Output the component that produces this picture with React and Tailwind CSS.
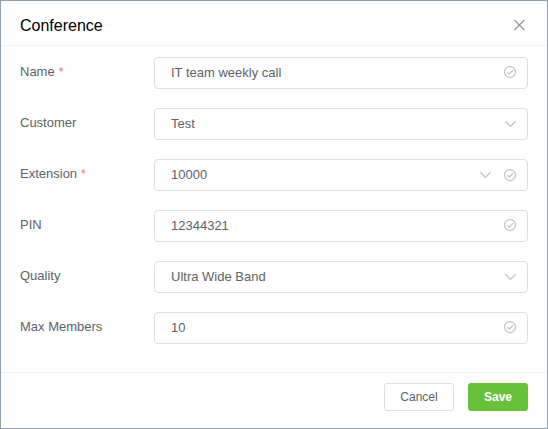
function CheckCircle() {
  return (
    <svg viewBox="0 0 14 14" className="h-3.5 w-3.5" fill="none" stroke="#c0c4cc" strokeWidth="1.25">
      <circle cx="7" cy="7" r="5.5" />
      <path d="M4.2 7.1 6.3 9.1 10 5.1" />
    </svg>
  );
}

function Chevron() {
  return (
    <svg viewBox="0 0 14 14" className="h-3.5 w-3.5" fill="none" stroke="#c0c4cc" strokeWidth="1.25">
      <path d="M2.4 4.3 7.5 9.4 12.6 4.3" />
    </svg>
  );
}

const fields = [
  { label: "Name", required: true, value: "IT team weekly call", valid: true },
  { label: "Customer", value: "Test", select: true },
  { label: "Extension", required: true, value: "10000", select: true, valid: true },
  { label: "PIN", value: "12344321", valid: true },
  { label: "Quality", value: "Ultra Wide Band", select: true },
  { label: "Max Members", value: "10", valid: true },
];

function Field({ label, required, value, select, valid }) {
  return (
    <div className="flex h-8">
      <div className="w-[134px] shrink-0 text-[13px] leading-[30px]">
        {label}
        {required && <span className="ml-1 text-xs text-[#f56c6c]">*</span>}
      </div>
      <div className="flex flex-1 items-center justify-between rounded border border-[#dcdfe6] pr-[10px] pl-4">
        <span className="text-[13px] leading-[30px]">{value}</span>
        <span className={select ? "flex items-center gap-[11px]" : "flex items-center pb-0.5"}>
          {select && <Chevron />}
          {valid && <CheckCircle />}
        </span>
      </div>
    </div>
  );
}

export default function App() {
  return (
    <div className="flex h-[429px] w-[548px] flex-col border border-[#909faa] bg-white font-['Liberation_Sans',Arial,sans-serif] text-[#606266]">
      <header className="flex h-[45px] items-center justify-between border-b border-[#ebf5fc] pr-[21px] pl-[19px]">
        <h1 className="pt-1.5 text-base leading-6 text-black">Conference</h1>
        <svg viewBox="0 0 14 14" className="mt-1 h-3.5 w-3.5" fill="none" stroke="#909399" strokeWidth="1.1">
          <path d="M2.4 2 12.4 12M12.4 2 2.4 12" />
        </svg>
      </header>
      <main className="flex flex-1 flex-col gap-[19px] px-[19px] pt-[11px]">
        {fields.map((f) => (
          <Field key={f.label} {...f} />
        ))}
      </main>
      <footer className="flex h-14 items-start justify-end gap-3.5 border-t border-[#ebf5fc] pt-[10px] pr-[19px] text-xs">
        <button className="h-7 w-[70px] rounded-[3px] border border-[#dcdfe6]">Cancel</button>
        <button className="h-7 w-[60px] rounded-[3px] bg-[#67c23a] font-bold text-white">Save</button>
      </footer>
    </div>
  );
}
